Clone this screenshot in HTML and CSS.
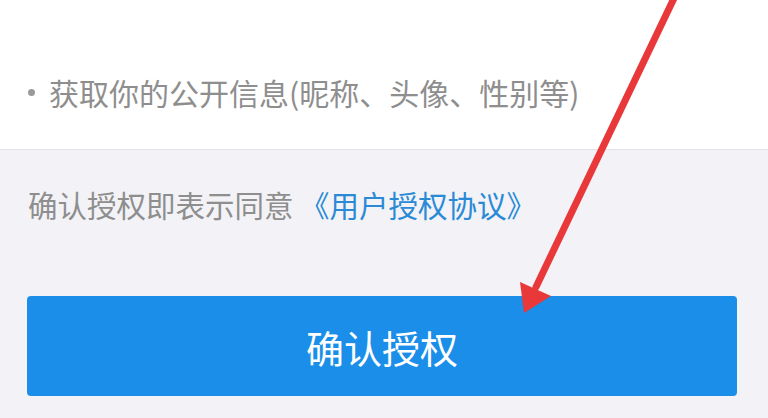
FILE: index.html
```html
<!DOCTYPE html>
<html lang="zh-CN">
<head>
<meta charset="utf-8">
<link rel="stylesheet" href="styles.css">
</head>
<body>
<div class="page">
  <section class="scope">
    <ul class="scope-list">
      <li class="scope-item">获取你的公开信息(昵称、头像、性别等)</li>
    </ul>
  </section>
  <section class="footer">
    <p class="agree">确认授权即表示同意 <a class="link" href="#">《用户授权协议》</a></p>
    <button class="confirm">确认授权</button>
  </section>
  <svg class="arrow" width="768" height="418" viewBox="0 0 768 418">
    <line x1="676" y1="-6" x2="536" y2="287" stroke="#e8383a" stroke-width="7" stroke-linecap="round"/>
    <polygon points="524,313 520,282 551,296" fill="#e8383a"/>
  </svg>
</div>
</body>
</html>
```
FILE: styles.css
```css
html, body {
  margin: 0;
  padding: 0;
}
body {
  width: 768px;
  height: 418px;
  overflow: hidden;
  background: #f3f3f7;
  font-family: "Noto Sans CJK SC", "Noto Sans", sans-serif;
}
.page {
  position: relative;
  width: 768px;
  height: 418px;
}
.scope {
  background: #ffffff;
  height: 149px;
  border-bottom: 1px solid #e2e2e6;
  box-sizing: content-box;
}
.scope-list {
  margin: 0;
  padding: 72px 0 0 28px;
  list-style: none;
}
.scope-item {
  display: flex;
  align-items: center;
  font-size: 30px;
  line-height: 40px;
  color: #8e8e8e;
}
.scope-item::before {
  content: "";
  width: 7px;
  height: 7px;
  border-radius: 50%;
  background: #9a9a9a;
  margin-right: 14px;
  flex: none;
}
.footer {
  padding: 34px 31px 0 27px;
}
.agree {
  margin: 0 0 0 1px;
  font-size: 29.5px;
  line-height: 40px;
  color: #8e8e8e;
  white-space: nowrap;
}
.link {
  color: #2a8ad6;
  text-decoration: none;
}
.confirm {
  display: block;
  margin-top: 72px;
  width: 710px;
  height: 100px;
  border: none;
  border-radius: 4px;
  background: #1a8ee8;
  color: #ffffff;
  font-family: "Noto Sans CJK SC", "Noto Sans", sans-serif;
  font-size: 38px;
  padding: 0;
}
.arrow {
  position: absolute;
  left: 0;
  top: 0;
  pointer-events: none;
}
```
